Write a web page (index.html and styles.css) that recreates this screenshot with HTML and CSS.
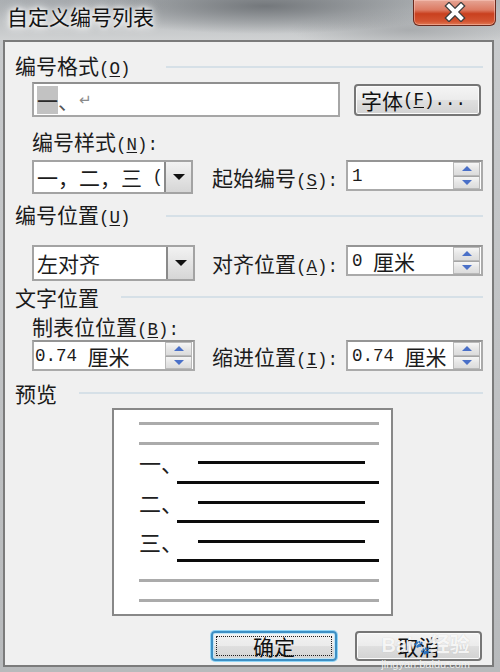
FILE: index.html
```html
<!DOCTYPE html>
<html lang="zh-CN">
<head>
<meta charset="utf-8">
<title>自定义编号列表</title>
<link rel="stylesheet" href="styles.css">
</head>
<body>
<div class="window">
  <div class="titlebar">
    <div class="title">自定义编号列表</div>
    <div class="close">
      <svg width="26" height="20" viewBox="0 0 26 20">
        <path d="M7 4 L19 16 M19 4 L7 16" stroke="#3d3d3d" stroke-width="6.5" stroke-linecap="square" fill="none"/>
        <path d="M7 4 L19 16 M19 4 L7 16" stroke="#ffffff" stroke-width="4" stroke-linecap="square" fill="none"/>
      </svg>
    </div>
  </div>
  <div class="client">
    <div class="group g1"><span class="glabel">编号格式<span class="m">(<u>O</u>)</span></span><span class="sep sep-wide"></span></div>

    <div class="row r-format">
      <div class="field fmt"><span class="hl">一</span><span class="pun">、</span><span class="ret">↵</span></div>
      <div class="btn btn-font">字体<span class="m">(<u>F</u>)...</span></div>
    </div>

    <div class="sub l-style">编号样式<span class="m">(<u>N</u>):</span></div>
    <div class="row r-style">
      <div class="combo c1"><div class="ctext">一，二，三<span class="m">&nbsp;(</span></div><div class="carrow"><span class="tri"></span></div></div>
      <div class="lbl">起始编号<span class="m">(<u>S</u>):</span></div>
      <div class="spin sp-right"><div class="stext"><span class="m">1</span></div><div class="sbtns"><span class="sb"><i class="up"></i></span><span class="sb"><i class="down"></i></span></div></div>
    </div>

    <div class="group g2"><span class="glabel">编号位置<span class="m">(<u>U</u>)</span></span><span class="sep sep-wide"></span></div>

    <div class="row r-align">
      <div class="combo c2"><div class="ctext">左对齐</div><div class="carrow"><span class="tri"></span></div></div>
      <div class="lbl">对齐位置<span class="m">(<u>A</u>):</span></div>
      <div class="spin sp-right"><div class="stext"><span class="m">0&nbsp;</span>厘米</div><div class="sbtns"><span class="sb"><i class="up"></i></span><span class="sb"><i class="down"></i></span></div></div>
    </div>

    <div class="group g3"><span class="glabel">文字位置</span><span class="sep"></span></div>

    <div class="sub l-tab">制表位位置<span class="m">(<u>B</u>):</span></div>
    <div class="row r-tab">
      <div class="spin sp-left"><div class="stext"><span class="m">0.74&nbsp;</span>厘米</div><div class="sbtns"><span class="sb"><i class="up"></i></span><span class="sb"><i class="down"></i></span></div></div>
      <div class="lbl">缩进位置<span class="m">(<u>I</u>):</span></div>
      <div class="spin sp-right"><div class="stext"><span class="m">0.74&nbsp;</span>厘米</div><div class="sbtns"><span class="sb"><i class="up"></i></span><span class="sb"><i class="down"></i></span></div></div>
    </div>

    <div class="group g4"><span class="glabel">预览</span><span class="sep"></span></div>

    <div class="preview">
      <div class="pr"><i class="gline"></i></div>
      <div class="pr"><i class="gline"></i></div>
      <div class="pr"><span class="num">一、</span><i class="bk l1"></i></div>
      <div class="pr"><i class="bk l2"></i></div>
      <div class="pr"><span class="num">二、</span><i class="bk l1"></i></div>
      <div class="pr"><i class="bk l2"></i></div>
      <div class="pr"><span class="num">三、</span><i class="bk l1"></i></div>
      <div class="pr"><i class="bk l2"></i></div>
      <div class="pr"><i class="gline"></i></div>
      <div class="pr"><i class="gline"></i></div>
    </div>

    <div class="row r-buttons">
      <div class="btn btn-ok"><span class="focus">确定</span></div>
      <div class="btn btn-cancel">取消</div>
      <div class="watermark"><span class="wm-top">Bai<span class="paw">🐾</span>经验</span><span class="wm-url">jingyan.baidu.com</span></div>
    </div>
  </div>
</div>
</body>
</html>
```

FILE: styles.css
```css
* { box-sizing: border-box; }
html, body { margin: 0; padding: 0; }
body {
  width: 500px;
  height: 672px;
  overflow: hidden;
  font-family: "Noto Sans CJK SC", "Noto Sans", sans-serif;
  font-size: 21px;
  color: #1c1c1c;
  background: #c3c5c7;
}
u { text-decoration: underline; text-underline-offset: 2px; }
.m { font-family: "Liberation Mono", "DejaVu Sans Mono", monospace; font-size: 17.5px; }

.window {
  width: 500px;
  height: 672px;
  display: flex;
  flex-direction: column;
  background: linear-gradient(#c9cbcd, #b8babc);
}

/* title bar */
.titlebar {
  flex: none;
  height: 40px;
  display: flex;
  justify-content: space-between;
  align-items: flex-start;
  background:
    radial-gradient(ellipse 190px 28px at 265px 6px, rgba(112,116,120,0.95), rgba(112,116,120,0)),
    radial-gradient(ellipse 110px 22px at 60px 2px, rgba(160,164,168,0.7), rgba(160,164,168,0)),
    radial-gradient(ellipse 120px 20px at 410px 30px, rgba(150,153,156,0.6), rgba(150,153,156,0)),
    linear-gradient(#b0b4b7 0%, #c0c3c5 55%, #d0d2d3 100%);
}
.title {
  padding: 3px 0 0 7px;
  line-height: 26px;
  font-size: 21px;
  color: #141414;
  text-shadow: 0 0 4px #fff, 0 0 8px #fff, 0 0 12px rgba(255,255,255,0.9);
}
.close {
  width: 83px;
  height: 26px;
  margin-right: 4px;
  border: 1px solid #6a2a1e;
  border-top: none;
  border-radius: 0 0 6px 6px;
  background: linear-gradient(#e6a595 0%, #dc7a62 40%, #c9401f 55%, #d35431 85%, #e07a55 100%);
  box-shadow: inset 0 0 0 1px rgba(255,210,200,0.45);
  display: flex;
  align-items: center;
  justify-content: center;
}
.close svg { display: block; margin-top: -2px; }

/* client */
.client {
  flex: 1;
  margin: 0 6px 5px 3px;
  border: 2px solid #7b7b7b;
  background: #f0f0f0;
  padding: 0 9px 0 10px;
  display: flex;
  flex-direction: column;
}

.group {
  display: flex;
  align-items: center;
  height: 24px;
  line-height: 24px;
  color: #1a1a1a;
}
.glabel { white-space: nowrap; }
.sep {
  flex: 1;
  height: 2px;
  margin-left: 22px;
  background: #d6e0e7;
}
.sep-wide { margin-left: 35px; }
.g1 { margin-top: 13px; }
.g2 { margin-top: 10px; }
.g3 { margin-top: 4px; }
.g4 { margin-top: 10px; }

.sub { margin-left: 17px; white-space: nowrap; }
.l-style { margin-top: 12px; line-height: 24px; }
.l-tab { margin-top: 7px; line-height: 20px; }

.row { display: flex; align-items: center; margin-left: 17px; }
.r-format { margin-top: 3px; height: 35px; }
.r-style { margin-top: 3px; height: 34px; }
.r-align { margin-top: 17px; height: 36px; }
.r-tab { height: 31px; }

/* text field */
.field {
  background: #fff;
  border: 2px solid #a6a6a6;
  border-top-color: #8f8f8f;
}
.fmt {
  width: 308px;
  height: 35px;
  display: flex;
  align-items: center;
  padding-left: 3px;
}
.hl {
  display: inline-block;
  height: 28px;
  line-height: 28px;
  background: #c2c2c2;
  color: #2a2a2a;
}
.pun { color: #555; }
.ret { color: #8a8a8a; font-size: 15px; font-family: "DejaVu Sans", sans-serif; }

/* buttons */
.btn {
  display: flex;
  align-items: center;
  justify-content: center;
  border: 2px solid #767676;
  border-radius: 4px;
  background: linear-gradient(#f4f4f4 0%, #ececec 48%, #dfdfdf 52%, #d2d2d2 100%);
  box-shadow: inset 0 0 0 1px #fbfbfb;
  color: #111;
  white-space: nowrap;
}
.btn-font {
  width: 127px;
  height: 32px;
  margin-left: 14px;
  padding-right: 8px;
}

/* combo */
.combo {
  flex: none;
  display: flex;
  background: #fff;
  border: 2px solid #a3a3a3;
  margin-right: 19px;
  overflow: hidden;
}
.c1 { width: 161px; height: 34px; }
.c2 { width: 163px; height: 36px; margin-right: 17px; }
.ctext {
  flex: 1;
  min-width: 0;
  overflow: hidden;
  white-space: nowrap;
  padding-left: 3px;
  display: flex;
  align-items: center;
}
.carrow {
  flex: none;
  width: 29px;
  border: 2px solid #8a8a8a;
  margin: -2px -2px -2px 0;
  background: linear-gradient(#f2f2f2, #e4e4e4 50%, #d6d6d6);
  display: flex;
  align-items: center;
  justify-content: center;
}
.tri {
  width: 0;
  height: 0;
  border-left: 6px solid transparent;
  border-right: 6px solid transparent;
  border-top: 6px solid #111;
}

/* labels */
.lbl {
  width: 134px;
  flex: none;
  white-space: nowrap;
}

/* spin */
.spin {
  flex: none;
  height: 31px;
  display: flex;
  background: #fff;
  border: 2px solid #aaaaaa;
  border-top-color: #959595;
}
.r-style .spin, .r-align .spin { align-self: flex-start; }
.sp-right { width: 137px; }
.sp-left { width: 163px; margin-right: 17px; }
.stext {
  flex: 1;
  min-width: 0;
  display: flex;
  align-items: center;
  padding-left: 4px;
  white-space: nowrap;
  overflow: hidden;
}
.sp-left .stext { padding-left: 1px; }
.sbtns {
  flex: none;
  width: 27px;
  margin: 0 1px 0 0;
  display: flex;
  flex-direction: column;
}
.sb {
  flex: 1;
  border: 1px solid #b9b9b9;
  background: linear-gradient(#f6f6f6, #e6e6e6 50%, #dcdcdc);
  display: flex;
  align-items: center;
  justify-content: center;
}
.sb + .sb { border-top-color: #a5a5a5; }
.up, .down { width: 0; height: 0; border-left: 5px solid transparent; border-right: 5px solid transparent; }
.up { border-bottom: 5px solid #4a70c8; }
.down { border-top: 5px solid #4a70c8; }

/* preview */
.preview {
  margin-top: 3px;
  margin-left: 97px;
  width: 281px;
  height: 208px;
  border: 2px solid #888;
  background: #fff;
  padding: 4px 0 0 25px;
}
.pr {
  height: 19.6px;
  display: flex;
  align-items: center;
}
.gline { display: block; width: 240px; height: 3px; background: #ababab; }
.bk { display: block; height: 3px; background: #0c0c0c; }
.l1 { width: 167px; }
.l2 { width: 202px; margin-left: 38px; }
.num {
  width: 59px;
  flex: none;
  font-size: 22px;
  line-height: 19px;
  color: #202020;
  white-space: nowrap;
  overflow: visible;
}

/* bottom buttons */
.r-buttons {
  position: relative;
  margin-top: 15px;
  height: 30px;
  margin-right: 1px;
  justify-content: flex-end;
}
.btn-ok {
  width: 126px;
  height: 30px;
  border: 2px solid #3d8fc4;
  box-shadow: 0 0 0 1px #8fd4f5, inset 0 0 0 1px #bfe6f8;
  background: linear-gradient(#f2f2f2 0%, #ebebeb 48%, #dedede 52%, #d4d4d4 100%);
  padding: 3px;
}
.focus {
  flex: 1;
  align-self: stretch;
  display: flex;
  align-items: center;
  justify-content: center;
  border: 1px dotted #222;
}
.btn-cancel {
  width: 127px;
  height: 30px;
  margin-left: 18px;
}
.watermark {
  position: absolute;
  right: 12px;
  top: 3px;
  display: flex;
  flex-direction: column;
  align-items: center;
  color: rgba(255,255,255,0.85);
  text-shadow: 0 0 1px rgba(120,120,120,0.35);
  pointer-events: none;
}
.wm-top { font-family: "Liberation Sans", "Noto Sans CJK SC", sans-serif; font-size: 20px; line-height: 22px; font-weight: bold; }
.paw { font-size: 14px; font-weight: normal; }
.wm-url { font-family: "Liberation Sans", sans-serif; font-size: 11px; line-height: 12px; }
```
